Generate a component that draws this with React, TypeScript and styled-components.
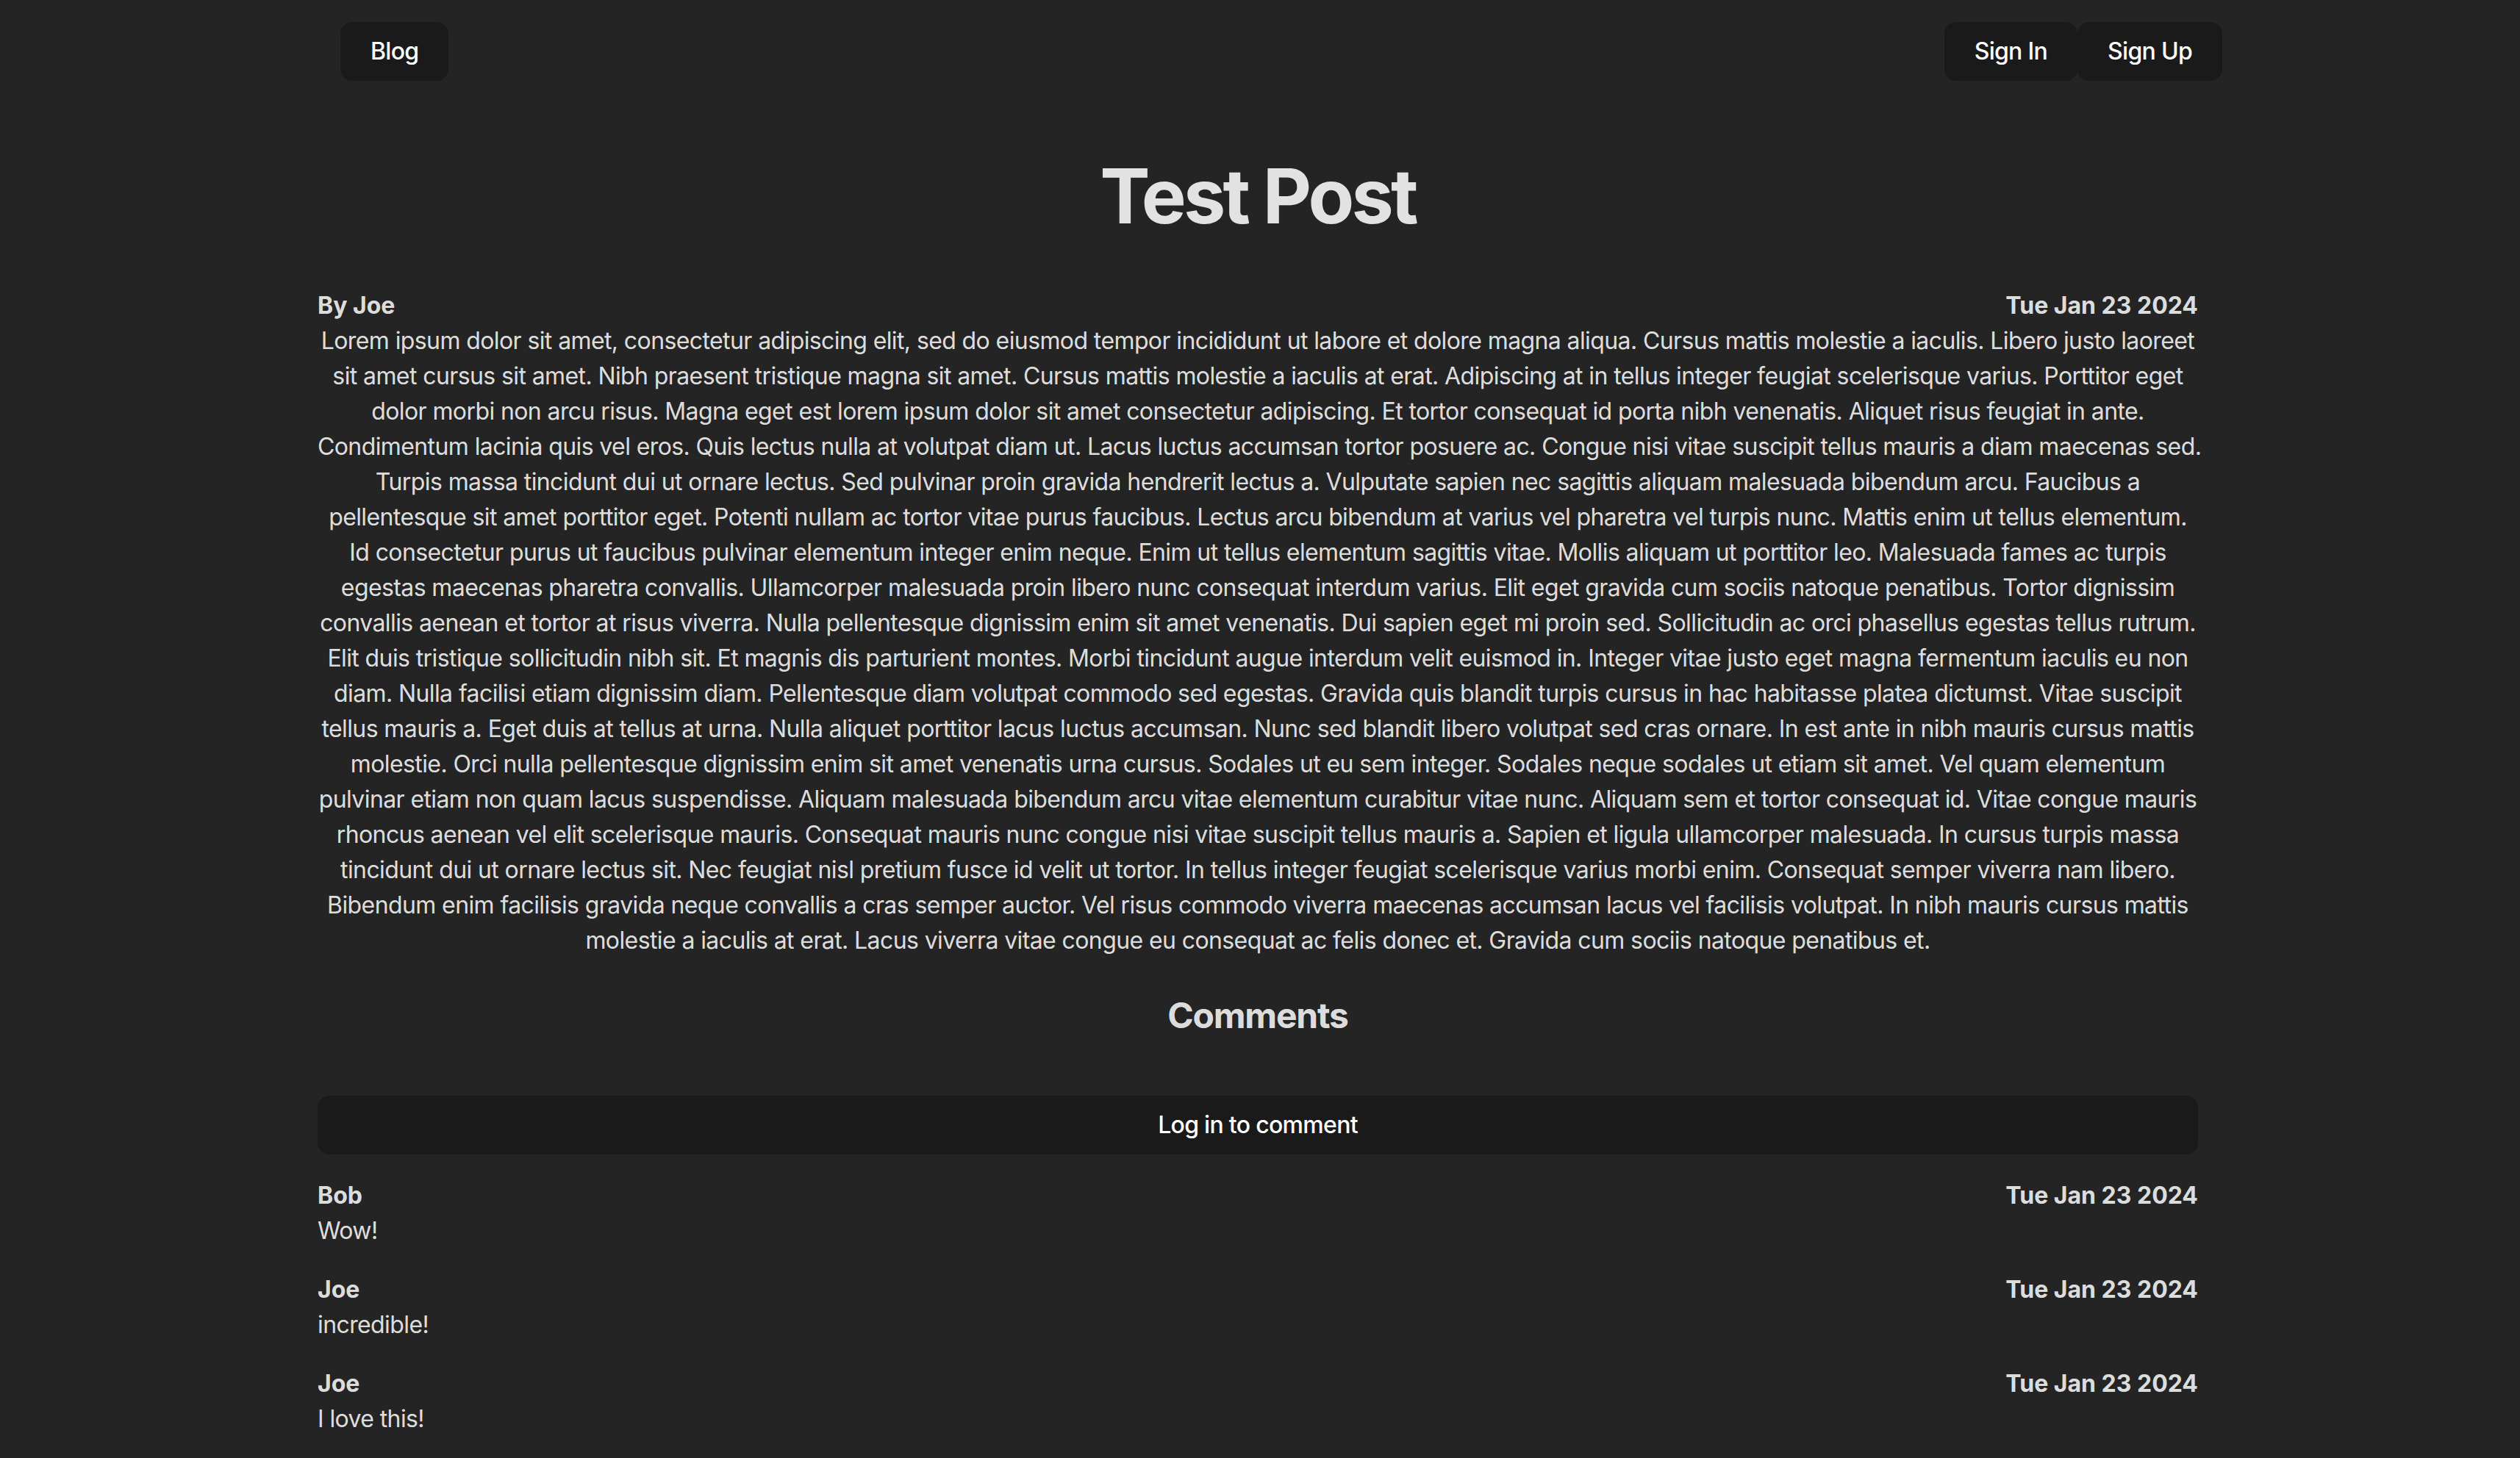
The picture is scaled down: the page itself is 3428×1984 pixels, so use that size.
import React from "react";
import styled, { createGlobalStyle } from "styled-components";

const GlobalStyle = createGlobalStyle`
  html, body {
    margin: 0;
    padding: 0;
    background: #242424;
  }
  body {
    font-family: Inter, "Noto Sans", sans-serif;
    font-size: 32px;
    line-height: 48px;
    color: rgba(255, 255, 255, 0.87);
    -webkit-font-smoothing: antialiased;
  }
`;

const Page = styled.div`
  min-height: 1984px;
  background: #242424;
  display: flex;
  flex-direction: column;
`;

const NavBar = styled.nav`
  width: 2560px;
  margin-left: calc(50% - 1251px);
  padding-top: 30px;
  display: flex;
  justify-content: space-between;
  align-items: center;
`;

const NavGroup = styled.div`
  display: flex;
`;

const Button = styled.button<{ $wide?: boolean }>`
  height: 80px;
  padding: 0 ${(p) => (p.$wide ? "0" : "41px")};
  width: ${(p) => (p.$wide ? "100%" : "auto")};
  border: none;
  border-radius: 16px;
  background: #1a1a1a;
  color: #ffffff;
  font-family: Inter, "Noto Sans", sans-serif;
  font-size: 32px;
  font-weight: 500;
  line-height: 48px;
  letter-spacing: -0.7px;
  cursor: pointer;
`;

const Main = styled.main`
  width: 2558px;
  margin-left: calc(50% - 1282px);
  display: flex;
  flex-direction: column;
`;

const Title = styled.h1`
  margin: 101px 0 0;
  font-size: 102.4px;
  line-height: 1.1;
  font-weight: 700;
  letter-spacing: -3.8px;
  text-align: center;
  color: rgba(255, 255, 255, 0.87);
`;

const MetaRow = styled.div<{ $top?: number }>`
  display: flex;
  justify-content: space-between;
  font-weight: 700;
  margin-top: ${(p) => p.$top ?? 0}px;
`;

const Body = styled.p`
  margin: 0;
  text-align: center;
  letter-spacing: -0.6px;
`;

const Line = styled.span`
  display: block;
  white-space: nowrap;
`;

const SectionTitle = styled.h2`
  margin: 42px 0 73px;
  font-size: 48px;
  line-height: 72px;
  font-weight: 700;
  letter-spacing: -1.2px;
  text-align: center;
`;

const CommentList = styled.div`
  margin-top: 32px;
  display: flex;
  flex-direction: column;
  gap: 32px;
`;

const Comment = styled.div`
  display: flex;
  flex-direction: column;
`;

const CommentText = styled.div`
  letter-spacing: -0.6px;
`;

const lines = [
  "Lorem ipsum dolor sit amet, consectetur adipiscing elit, sed do eiusmod tempor incididunt ut labore et dolore magna aliqua. Cursus mattis molestie a iaculis. Libero justo laoreet",
  "sit amet cursus sit amet. Nibh praesent tristique magna sit amet. Cursus mattis molestie a iaculis at erat. Adipiscing at in tellus integer feugiat scelerisque varius. Porttitor eget",
  "dolor morbi non arcu risus. Magna eget est lorem ipsum dolor sit amet consectetur adipiscing. Et tortor consequat id porta nibh venenatis. Aliquet risus feugiat in ante.",
  "Condimentum lacinia quis vel eros. Quis lectus nulla at volutpat diam ut. Lacus luctus accumsan tortor posuere ac. Congue nisi vitae suscipit tellus mauris a diam maecenas sed.",
  "Turpis massa tincidunt dui ut ornare lectus. Sed pulvinar proin gravida hendrerit lectus a. Vulputate sapien nec sagittis aliquam malesuada bibendum arcu. Faucibus a",
  "pellentesque sit amet porttitor eget. Potenti nullam ac tortor vitae purus faucibus. Lectus arcu bibendum at varius vel pharetra vel turpis nunc. Mattis enim ut tellus elementum.",
  "Id consectetur purus ut faucibus pulvinar elementum integer enim neque. Enim ut tellus elementum sagittis vitae. Mollis aliquam ut porttitor leo. Malesuada fames ac turpis",
  "egestas maecenas pharetra convallis. Ullamcorper malesuada proin libero nunc consequat interdum varius. Elit eget gravida cum sociis natoque penatibus. Tortor dignissim",
  "convallis aenean et tortor at risus viverra. Nulla pellentesque dignissim enim sit amet venenatis. Dui sapien eget mi proin sed. Sollicitudin ac orci phasellus egestas tellus rutrum.",
  "Elit duis tristique sollicitudin nibh sit. Et magnis dis parturient montes. Morbi tincidunt augue interdum velit euismod in. Integer vitae justo eget magna fermentum iaculis eu non",
  "diam. Nulla facilisi etiam dignissim diam. Pellentesque diam volutpat commodo sed egestas. Gravida quis blandit turpis cursus in hac habitasse platea dictumst. Vitae suscipit",
  "tellus mauris a. Eget duis at tellus at urna. Nulla aliquet porttitor lacus luctus accumsan. Nunc sed blandit libero volutpat sed cras ornare. In est ante in nibh mauris cursus mattis",
  "molestie. Orci nulla pellentesque dignissim enim sit amet venenatis urna cursus. Sodales ut eu sem integer. Sodales neque sodales ut etiam sit amet. Vel quam elementum",
  "pulvinar etiam non quam lacus suspendisse. Aliquam malesuada bibendum arcu vitae elementum curabitur vitae nunc. Aliquam sem et tortor consequat id. Vitae congue mauris",
  "rhoncus aenean vel elit scelerisque mauris. Consequat mauris nunc congue nisi vitae suscipit tellus mauris a. Sapien et ligula ullamcorper malesuada. In cursus turpis massa",
  "tincidunt dui ut ornare lectus sit. Nec feugiat nisl pretium fusce id velit ut tortor. In tellus integer feugiat scelerisque varius morbi enim. Consequat semper viverra nam libero.",
  "Bibendum enim facilisis gravida neque convallis a cras semper auctor. Vel risus commodo viverra maecenas accumsan lacus vel facilisis volutpat. In nibh mauris cursus mattis",
  "molestie a iaculis at erat. Lacus viverra vitae congue eu consequat ac felis donec et. Gravida cum sociis natoque penatibus et.",
];

const comments = [
  { author: "Bob", date: "Tue Jan 23 2024", body: "Wow!" },
  { author: "Joe", date: "Tue Jan 23 2024", body: "incredible!" },
  { author: "Joe", date: "Tue Jan 23 2024", body: "I love this!" },
];

export default function App() {
  return (
    <Page>
      <GlobalStyle />
      <NavBar>
        <Button>Blog</Button>
        <NavGroup>
          <Button>Sign In</Button>
          <Button>Sign Up</Button>
        </NavGroup>
      </NavBar>
      <Main>
        <Title>Test Post</Title>
        <MetaRow $top={68}>
          <span>By Joe</span>
          <span>Tue Jan 23 2024</span>
        </MetaRow>
        <Body>
          {lines.map((l, i) => (
            <Line key={i}>{l} </Line>
          ))}
        </Body>
        <SectionTitle>Comments</SectionTitle>
        <Button $wide>Log in to comment</Button>
        <CommentList>
          {comments.map((c, i) => (
            <Comment key={i}>
              <MetaRow>
                <span>{c.author}</span>
                <span>{c.date}</span>
              </MetaRow>
              <CommentText>{c.body}</CommentText>
            </Comment>
          ))}
        </CommentList>
      </Main>
    </Page>
  );
}
